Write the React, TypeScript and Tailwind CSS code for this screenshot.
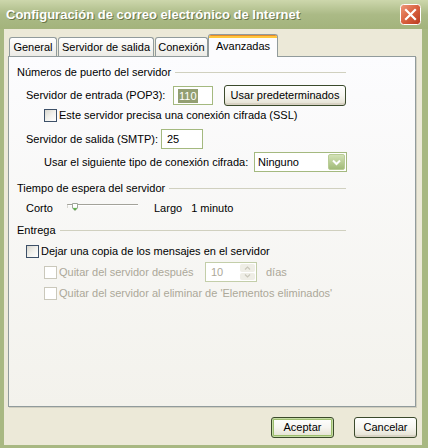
import React from "react";

const font = "font-['Liberation_Sans',Arial,sans-serif]";

function Checkbox({ disabled = false }: { disabled?: boolean }) {
  return (
    <div
      className={`h-[13px] w-[13px] shrink-0 border ${
        disabled
          ? "border-[#cac8bb] bg-white"
          : "border-[#3d5068] bg-gradient-to-br from-[#d8d7cf] via-[#f2f1ec] to-white"
      }`}
    />
  );
}

function XpButton({
  children,
  isDefault = false,
  className = "",
}: {
  children: React.ReactNode;
  isDefault?: boolean;
  className?: string;
}) {
  return (
    <div
      className={`flex items-center justify-center rounded-[3px] border border-[#3b4a2c] bg-gradient-to-b from-white via-[#f6f5f0] to-[#e3e0d0] text-black ${
        isDefault
          ? "shadow-[inset_0_0_0_1px_#c6dca4,inset_0_0_0_2px_#9cbd6e]"
          : "shadow-[inset_0_-2px_0_#d8d2c4]"
      } ${className}`}
    >
      {children}
    </div>
  );
}

function GroupHeader({ title, className = "" }: { title: string; className?: string }) {
  return (
    <div className={`flex h-[16px] w-[337px] items-center gap-[4px] pl-[8px] ${className}`}>
      <span className="whitespace-nowrap">{title}</span>
      <div className="h-px flex-1 bg-[#d0d0bf]" />
    </div>
  );
}

function Tab({ label, width, active = false }: { label: string; width: string; active?: boolean }) {
  if (active) {
    return (
      <div
        className={`relative z-10 -mb-px flex h-[23px] ${width} flex-col overflow-hidden rounded-t-[3px] border border-b-0 border-[#919b9c] bg-[#fcfcfe]`}
      >
        <div className="h-[1px] bg-[#e68b2c]" />
        <div className="h-[2px] bg-[#ffc73c]" />
        <div className="flex flex-1 items-center justify-center pb-[2px]">{label}</div>
      </div>
    );
  }
  return (
    <div
      className={`flex h-[19px] ${width} items-center justify-center rounded-t-[3px] border border-b-0 border-[#919b9c] bg-gradient-to-b from-white to-[#ecebe6]`}
    >
      {label}
    </div>
  );
}

export default function App() {
  return (
    <div className={`flex h-[448px] w-[428px] flex-col overflow-hidden bg-[#ece9d8] text-[11px] text-black ${font}`}>
      {/* title bar */}
      <div className="flex h-[29px] shrink-0 items-center justify-between bg-gradient-to-b from-[#cdd7ac] via-[#abba86] to-[#a3b37c] pl-[6px] pr-[7px]">
        <span className="text-[13px] font-bold text-white [text-shadow:1px_1px_0_#6a7748]">
          Configuración de correo electrónico de Internet
        </span>
        <svg width="21" height="21" viewBox="0 0 21 21">
          <defs>
            <linearGradient id="cl" x1="0" y1="0" x2="1" y2="1">
              <stop offset="0" stopColor="#ee9a7c" />
              <stop offset="0.5" stopColor="#d9613f" />
              <stop offset="1" stopColor="#b83a1f" />
            </linearGradient>
          </defs>
          <rect x="0.5" y="0.5" width="20" height="20" rx="3" fill="url(#cl)" stroke="#ffffff" />
          <path d="M6 6 L15 15 M15 6 L6 15" stroke="#ffffff" strokeWidth="2.2" strokeLinecap="square" />
        </svg>
      </div>

      {/* body */}
      <div className="flex flex-1 flex-col border-b-[3px] border-l-4 border-r-[6px] border-[#a8b882]">
        <div className="ml-[4px] mr-[6px] flex flex-col">
          <div className="flex h-[27px] items-end pl-[1px] pt-[5px]">
            <Tab label="General" width="w-[48px]" />
            <div className="w-px" />
            <Tab label="Servidor de salida" width="w-[96px]" />
            <div className="w-px" />
            <Tab label="Conexión" width="w-[53px]" />
            <Tab label="Avanzadas" width="w-[70px]" active />
          </div>

          <div className="flex h-[351px] flex-col border border-[#919b9c] bg-gradient-to-b from-[#fcfcfe] to-[#f3f2ec] pt-[7px] shadow-[1px_1px_0_#d0cebf]">
            <GroupHeader title="Números de puerto del servidor" />

            <div className="mt-[5px] flex h-[21px] items-center pl-[17px]">
              <span className="w-[147px] whitespace-nowrap">Servidor de entrada (POP3):</span>
              <div className="flex h-[19px] w-[40px] items-center border border-[#a4b97f] bg-white pl-[4px]">
                <span className="bg-[#939f72] px-[1px] leading-[14px] text-white">110</span>
              </div>
              <XpButton className="ml-[11px] h-[21px] w-[122px]">Usar predeterminados</XpButton>
            </div>

            <div className="mt-[2px] flex h-[14px] items-center pl-[35px]">
              <Checkbox />
              <span className="ml-[2px] whitespace-nowrap">Este servidor precisa una conexión cifrada (SSL)</span>
            </div>

            <div className="mt-[7px] flex h-[20px] items-center pl-[17px]">
              <span className="w-[135px] whitespace-nowrap">Servidor de salida (SMTP):</span>
              <div className="flex h-[20px] w-[42px] items-center border border-[#a4b97f] bg-white pl-[5px]">25</div>
            </div>

            <div className="mt-[3px] flex h-[20px] items-center pl-[35px]">
              <span className="w-[210px] whitespace-nowrap">Usar el siguiente tipo de conexión cifrada:</span>
              <div className="flex h-[20px] w-[93px] items-center border border-[#a4b97f] bg-white pl-[3px] pr-px">
                <span className="flex-1">Ninguno</span>
                <div className="flex h-[16px] w-[17px] items-center justify-center rounded-[2px] border border-[#b9cc96] bg-gradient-to-b from-[#d3e2b6] to-[#a2bb78]">
                  <svg width="9" height="7" viewBox="0 0 9 7">
                    <path d="M1 1.5 L4.5 5 L8 1.5" fill="none" stroke="#ffffff" strokeWidth="2" />
                  </svg>
                </div>
              </div>
            </div>

            <GroupHeader title="Tiempo de espera del servidor" className="mt-[8px]" />

            <div className="mt-[4px] flex h-[16px] items-center pl-[17px]">
              <span className="w-[41px]">Corto</span>
              <svg width="72" height="16" viewBox="0 0 72 16">
                <line x1="0" y1="4.5" x2="71" y2="4.5" stroke="#a3a29a" />
                <line x1="0" y1="5.5" x2="71" y2="5.5" stroke="#ffffff" />
                <path d="M0 4 L0 8" stroke="#b8b6ac" />
                <path d="M5.5 3.5 L10.5 3.5 L10.5 8 L8 10.5 L5.5 8 Z" fill="#ffffff" stroke="#9fa69a" />
                <path d="M6.5 8 L8 9.5 L9.5 8" fill="none" stroke="#4fa83a" strokeWidth="1.3" />
              </svg>
              <span className="ml-[15px]">Largo</span>
              <span className="ml-[9px]">1 minuto</span>
            </div>

            <GroupHeader title="Entrega" className="mt-[6px]" />

            <div className="mt-[6px] flex h-[14px] items-center pl-[17px]">
              <Checkbox />
              <span className="ml-[2px] whitespace-nowrap">Dejar una copia de los mensajes en el servidor</span>
            </div>

            <div className="mt-[4px] flex h-[20px] items-center pl-[35px] text-[#aca899]">
              <Checkbox disabled />
              <span className="ml-[2px] w-[146px] whitespace-nowrap">Quitar del servidor después</span>
              <div className="flex h-[20px] w-[52px] items-center border border-[#c3cea9] bg-white">
                <span className="flex-1 pl-[5px]">10</span>
                <div className="mr-px flex h-[16px] w-[15px] flex-col gap-px">
                  <div className="flex flex-1 items-center justify-center rounded-[2px] bg-[#efeee6]">
                    <svg width="7" height="4" viewBox="0 0 7 4">
                      <path d="M1 3.5 L3.5 1 L6 3.5" fill="none" stroke="#c9c7ba" strokeWidth="1.2" />
                    </svg>
                  </div>
                  <div className="flex flex-1 items-center justify-center rounded-[2px] bg-[#efeee6]">
                    <svg width="7" height="4" viewBox="0 0 7 4">
                      <path d="M1 0.5 L3.5 3 L6 0.5" fill="none" stroke="#c9c7ba" strokeWidth="1.2" />
                    </svg>
                  </div>
                </div>
              </div>
              <span className="ml-[9px]">días</span>
            </div>

            <div className="mt-[4px] flex h-[14px] items-center pl-[35px] text-[#aca899]">
              <Checkbox disabled />
              <span className="ml-[2px] whitespace-nowrap">
                Quitar del servidor al eliminar de 'Elementos eliminados'
              </span>
            </div>
          </div>
        </div>

        <div className="mt-[10px] flex justify-end gap-[20px] pr-[5px]">
          <XpButton isDefault className="h-[21px] w-[63px]">
            Aceptar
          </XpButton>
          <XpButton className="h-[21px] w-[63px]">Cancelar</XpButton>
        </div>
      </div>
    </div>
  );
}
